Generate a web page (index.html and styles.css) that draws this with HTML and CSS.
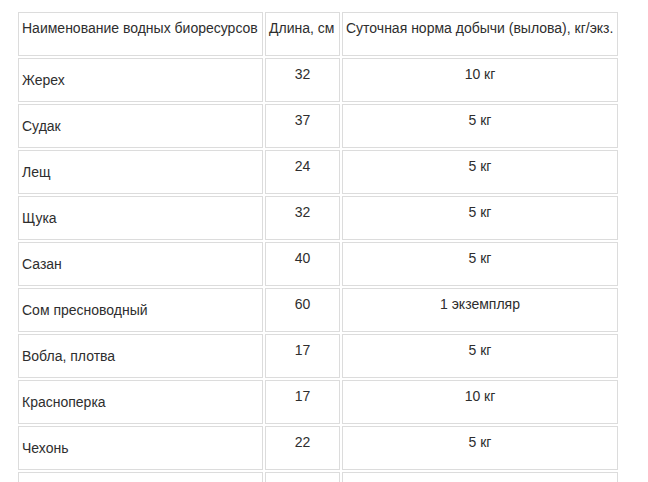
FILE: index.html
```html
<!DOCTYPE html>
<html lang="ru">
<head>
<meta charset="utf-8">
<title>Суточная норма добычи</title>
<link rel="stylesheet" href="styles.css">
</head>
<body>
<table class="norms">
  <thead>
    <tr>
      <th class="c-name">Наименование водных биоресурсов</th>
      <th class="c-len">Длина, см</th>
      <th class="c-norm">Суточная норма добычи (вылова), кг/экз.</th>
    </tr>
  </thead>
  <tbody>
    <tr><td class="name">Жерех</td><td class="val">32</td><td class="val">10 кг</td></tr>
    <tr><td class="name">Судак</td><td class="val">37</td><td class="val">5 кг</td></tr>
    <tr><td class="name">Лещ</td><td class="val">24</td><td class="val">5 кг</td></tr>
    <tr><td class="name">Щука</td><td class="val">32</td><td class="val">5 кг</td></tr>
    <tr><td class="name">Сазан</td><td class="val">40</td><td class="val">5 кг</td></tr>
    <tr><td class="name">Сом пресноводный</td><td class="val">60</td><td class="val">1 экземпляр</td></tr>
    <tr><td class="name">Вобла, плотва</td><td class="val">17</td><td class="val">5 кг</td></tr>
    <tr><td class="name">Красноперка</td><td class="val">17</td><td class="val">10 кг</td></tr>
    <tr><td class="name">Чехонь</td><td class="val">22</td><td class="val">5 кг</td></tr>
    <tr><td class="name"></td><td class="val"></td><td class="val"></td></tr>
  </tbody>
</table>
</body>
</html>
```
FILE: styles.css
```css
html, body {
  margin: 0;
  padding: 0;
  background: #ffffff;
}

body {
  font-family: "Liberation Sans", Arial, sans-serif;
  font-size: 14px;
  line-height: 16px;
  color: #2e2e2e;
}

.norms {
  margin: 10px 0 0 16px;
  border-collapse: separate;
  border-spacing: 2px;
  table-layout: fixed;
  width: 604px;
}

.norms th,
.norms td {
  box-sizing: border-box;
  height: 44px;
  border: 1px solid #dcdcdc;
  padding: 7px 3px;
  font-weight: normal;
  white-space: nowrap;
}

.norms th.c-name { width: 245px; }
.norms th.c-len { width: 75px; }
.norms th.c-norm { width: 276px; }

.norms th {
  text-align: left;
  vertical-align: top;
}

.norms td.name {
  text-align: left;
  vertical-align: middle;
  padding-top: 0;
  padding-bottom: 0;
}

.norms td.val {
  text-align: center;
  vertical-align: top;
}
```
